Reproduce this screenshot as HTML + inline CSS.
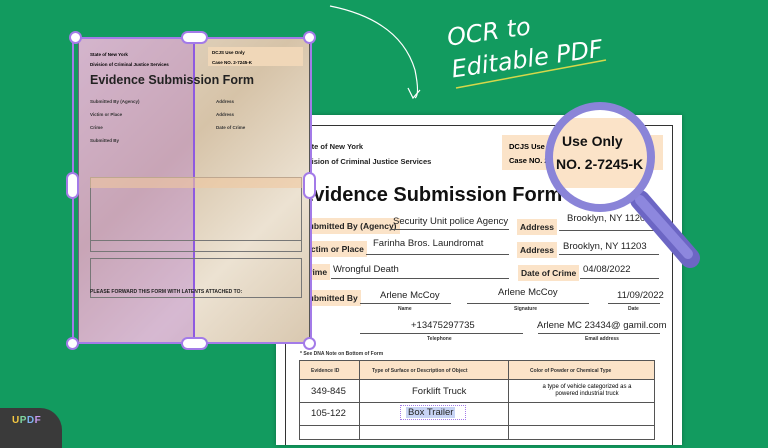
<!DOCTYPE html>
<html><head><meta charset="utf-8"><style>
*{margin:0;padding:0;box-sizing:border-box}
body{width:768px;height:432px;overflow:hidden;background:#129b5f;font-family:"Liberation Sans",sans-serif;position:relative}
.a{position:absolute}
.b{font-weight:bold}
.lbl{position:absolute;background:#fbe3c8;font-weight:bold;font-size:8.5px;padding:3px 3px;color:#222}
.ln{position:absolute;border-bottom:1px solid #555}
.v{position:absolute;font-size:9.5px;color:#222}
.s{position:absolute;font-size:5px;font-weight:bold;color:#333}
.h{position:absolute;background:#fff;border:2.5px solid #a37be8}
</style></head><body>
<div class="a" style="left:276px;top:115px;width:406px;height:330px;background:#fff;box-shadow:0 0 4px rgba(0,0,0,.3)"></div>
<div class="a" style="left:285px;top:125px;width:388px;height:320px;border:1.5px solid #333;border-bottom:none"></div>
<div class="a b" style="left:300px;top:142px;font-size:7.5px;color:#222">State of New York</div>
<div class="a b" style="left:300px;top:157px;font-size:7.5px;color:#222">Division of Criminal Justice Services</div>
<div class="a" style="left:502px;top:135px;width:161px;height:35px;background:#fbe3c8"></div>
<div class="a b" style="left:509px;top:142px;font-size:7.5px">DCJS Use Only</div>
<div class="a b" style="left:509px;top:156px;font-size:7.5px">Case NO. 2-7245-K</div>
<div class="a b" style="left:300px;top:184px;font-size:20px;color:#111">Evidence Submission Form</div>
<div class="lbl" style="left:300px;top:218px">Submitted By (Agency)</div>
<div class="v" style="left:393px;top:216px">Security Unit police Agency</div>
<div class="ln" style="left:391px;top:229px;width:118px"></div>
<div class="lbl" style="left:517px;top:219px">Address</div>
<div class="v" style="left:567px;top:213px">Brooklyn, NY 11203</div>
<div class="ln" style="left:559px;top:230px;width:100px"></div>
<div class="lbl" style="left:300px;top:241px">Victim or Place</div>
<div class="v" style="left:373px;top:238px">Farinha Bros. Laundromat</div>
<div class="ln" style="left:366px;top:254px;width:143px"></div>
<div class="lbl" style="left:517px;top:242px">Address</div>
<div class="v" style="left:563px;top:241px">Brooklyn, NY 11203</div>
<div class="ln" style="left:559px;top:254px;width:100px"></div>
<div class="lbl" style="left:300px;top:264px">Crime</div>
<div class="v" style="left:333px;top:264px">Wrongful Death</div>
<div class="ln" style="left:331px;top:278px;width:178px"></div>
<div class="lbl" style="left:518px;top:265px">Date of Crime</div>
<div class="v" style="left:583px;top:264px">04/08/2022</div>
<div class="ln" style="left:580px;top:278px;width:79px"></div>
<div class="lbl" style="left:300px;top:290px">Submitted By</div>
<div class="v" style="left:380px;top:290px">Arlene McCoy</div>
<div class="ln" style="left:360px;top:303px;width:91px"></div>
<div class="s" style="left:398px;top:306px">Name</div>
<div class="v" style="left:498px;top:287px">Arlene McCoy</div>
<div class="ln" style="left:467px;top:303px;width:122px"></div>
<div class="s" style="left:514px;top:306px">Signature</div>
<div class="v" style="left:617px;top:290px">11/09/2022</div>
<div class="ln" style="left:608px;top:303px;width:52px"></div>
<div class="s" style="left:628px;top:306px">Date</div>
<div class="v" style="left:411px;top:320px">+13475297735</div>
<div class="ln" style="left:360px;top:333px;width:163px"></div>
<div class="s" style="left:427px;top:336px">Telephone</div>
<div class="v" style="left:537px;top:320px">Arlene MC 23434@ gamil.com</div>
<div class="ln" style="left:538px;top:333px;width:122px"></div>
<div class="s" style="left:585px;top:336px">Email address</div>
<div class="s" style="left:300px;top:351px">* See DNA Note on Bottom of Form</div>
<div class="a" style="left:299px;top:360px;width:356px;height:80px;border:1px solid #555"></div>
<div class="a" style="left:300px;top:361px;width:354px;height:19px;background:#fbe3c8;border-bottom:1px solid #555"></div>
<div class="a" style="left:359px;top:360px;width:1px;height:80px;background:#555"></div>
<div class="a" style="left:508px;top:360px;width:1px;height:80px;background:#555"></div>
<div class="a" style="left:300px;top:402px;width:354px;height:1px;background:#555"></div>
<div class="a" style="left:300px;top:425px;width:354px;height:1px;background:#555"></div>
<div class="s" style="left:311px;top:368px">Evidence ID</div>
<div class="s" style="left:372px;top:368px">Type of Surface or Description of Object</div>
<div class="s" style="left:530px;top:368px">Color of Powder or Chemical Type</div>
<div class="v" style="left:311px;top:386px">349-845</div>
<div class="v" style="left:412px;top:386px">Forklift Truck</div>
<div class="a" style="left:532px;top:384px;font-size:6px;text-align:center;width:110px;line-height:7px">a type of vehicle categorized as a powered industrial truck</div>
<div class="v" style="left:311px;top:408px">105-122</div>
<div class="a" style="left:400px;top:405px;width:66px;height:15px;border:1px dotted #a37be8"></div>
<div class="v" style="left:406px;top:407px;background:#c8d4f5;padding:0 2px">Box Trailer</div>
<svg class="a" style="left:0;top:0" width="768" height="432">
<defs><clipPath id="c"><circle cx="600" cy="157" r="48"/></clipPath></defs>
<g clip-path="url(#c)"><rect x="540" y="100" width="120" height="120" fill="#fff"/><rect x="540" y="118" width="120" height="70" fill="#fbe3c8"/>
<text x="562" y="146" font-family="Liberation Sans" font-weight="bold" font-size="14" fill="#111">Use Only</text>
<text x="556" y="169" font-family="Liberation Sans" font-weight="bold" font-size="14" fill="#111">NO. 2-7245-K</text></g>
<line x1="640" y1="200" x2="690" y2="258" stroke="#6c66c4" stroke-width="20" stroke-linecap="round"/>
<line x1="640" y1="200" x2="688" y2="254" stroke="#8d87de" stroke-width="10" stroke-linecap="round"/>
<circle cx="600" cy="157" r="51" fill="none" stroke="#8a84d8" stroke-width="8"/>
<path d="M330 6 Q400 20 415 70 Q420 95 415 98" fill="none" stroke="#fff" stroke-width="1.2"/>
<path d="M408 88 L413 98 L420 90" fill="none" stroke="#fff" stroke-width="1.2"/>
<line x1="456" y1="88" x2="606" y2="60" stroke="#d6d84a" stroke-width="1.5"/>
</svg>
<div class="a" style="left:445px;top:22px;font-family:'DejaVu Sans',sans-serif;font-style:italic;font-size:24px;color:#fff;transform:rotate(-8deg);transform-origin:left top;line-height:32px">OCR to<br>Editable PDF</div>
<div class="a" style="left:78px;top:37px;width:232px;height:306px;background:linear-gradient(135deg,#e8dccb,#d6c3a8 40%,#ece2d2 70%,#d9c8b0);border:1.5px solid #555"></div>
<div class="a" style="left:78px;top:37px;width:117px;height:306px;background:rgba(176,110,210,.35)"></div>
<div class="a" style="left:193px;top:37px;width:2px;height:306px;background:#8e5ae0"></div>
<div class="a" style="left:72px;top:37px;width:240px;height:307px;border:2px solid #a37be8"></div>
<div class="a b" style="left:90px;top:52px;font-size:4.5px">State of New York<br><br>Division of Criminal Justice Services</div>
<div class="a" style="left:208px;top:47px;width:95px;height:19px;background:#f0d7b8"></div>
<div class="a b" style="left:212px;top:50px;font-size:4.5px">DCJS Use Only<br><br>Case NO. 2-7245-K</div>
<div class="a b" style="left:90px;top:73px;font-size:12.5px;color:#222">Evidence Submission Form</div>
<div class="a b" style="left:90px;top:95px;font-size:4.5px;line-height:13px;color:#333">Submitted By (Agency)<br>Victim or Place<br>Crime<br>Submitted By</div>
<div class="a b" style="left:216px;top:95px;font-size:4.5px;line-height:13px;color:#333">Address<br>Address<br>Date of Crime</div>
<div class="a" style="left:90px;top:177px;width:212px;height:75px;border:1px solid #777"></div>
<div class="a" style="left:90px;top:177px;width:212px;height:11px;background:rgba(240,200,160,.6)"></div>
<div class="a" style="left:90px;top:240px;width:212px;height:1px;background:#777"></div>
<div class="a" style="left:90px;top:258px;width:212px;height:40px;border:1px solid #777"></div>
<div class="a b" style="left:90px;top:289px;font-size:5px;color:#222">PLEASE FORWARD THIS FORM WITH LATENTS ATTACHED TO:</div>
<div class="h" style="left:69px;top:31px;width:13px;height:13px;border-radius:50%"></div>
<div class="h" style="left:303px;top:31px;width:13px;height:13px;border-radius:50%"></div>
<div class="h" style="left:66px;top:337px;width:13px;height:13px;border-radius:50%"></div>
<div class="h" style="left:303px;top:337px;width:13px;height:13px;border-radius:50%"></div>
<div class="h" style="left:181px;top:31px;width:27px;height:13px;border-radius:7px"></div>
<div class="h" style="left:181px;top:337px;width:27px;height:13px;border-radius:7px"></div>
<div class="h" style="left:66px;top:172px;width:13px;height:27px;border-radius:7px"></div>
<div class="h" style="left:303px;top:172px;width:13px;height:27px;border-radius:7px"></div>
<div class="a" style="left:-10px;top:408px;width:72px;height:40px;background:#3a3a3a;border-radius:0 22px 0 0"></div>
<div class="a b" style="left:12px;top:415px;font-size:10px;letter-spacing:.5px"><span style="color:#f5c842">U</span><span style="color:#7ed6a0">P</span><span style="color:#7fb4f0">D</span><span style="color:#c89af0">F</span></div>
</body></html>
